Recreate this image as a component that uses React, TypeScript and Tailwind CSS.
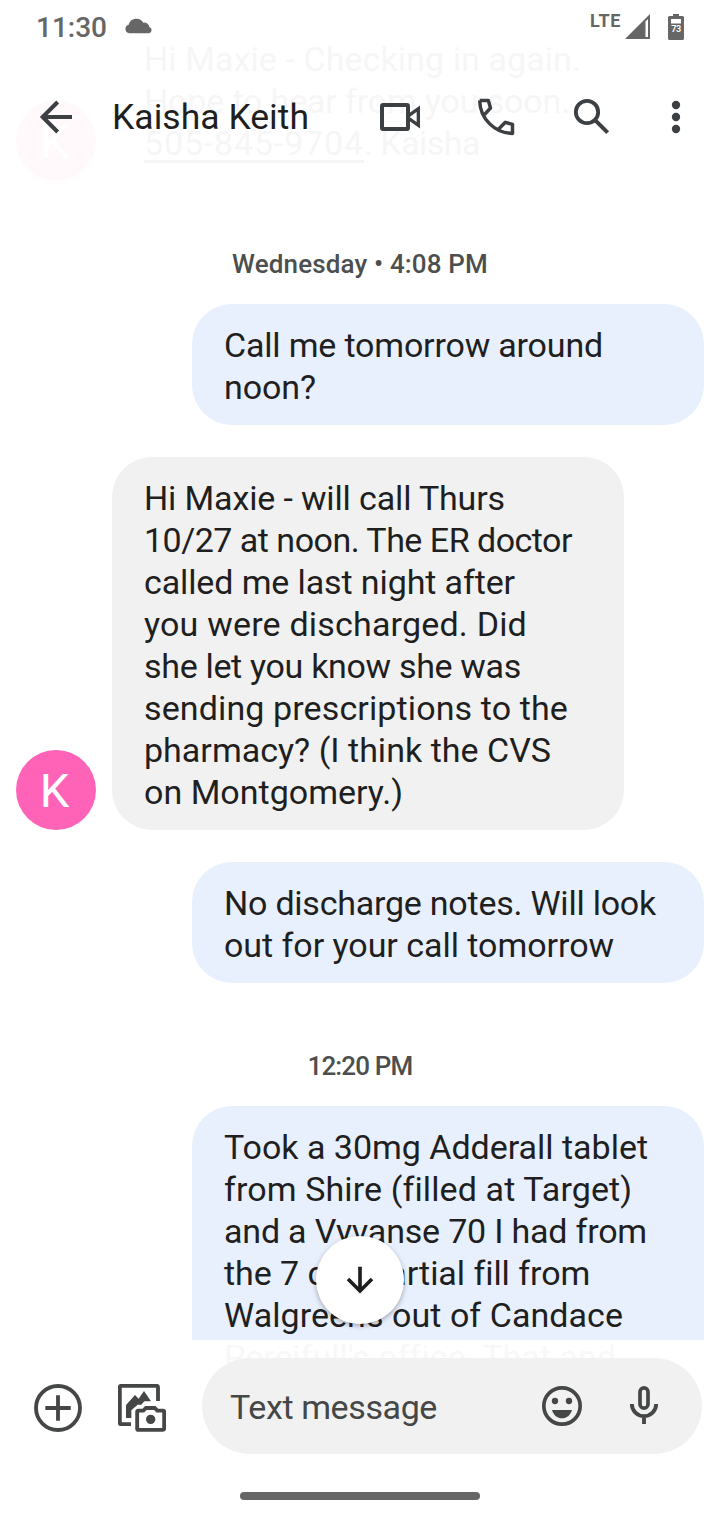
import { useLayoutEffect, useRef } from "react";
import type { ReactNode } from "react";

/** A single line of text tracked so that it fills the given width. */
function Line({ text, width, className = "" }: { text: string; width: number; className?: string }) {
  const ref = useRef<HTMLSpanElement>(null);
  useLayoutEffect(() => {
    const el = ref.current;
    if (!el) return;
    el.style.letterSpacing = "0px";
    const natural = el.getBoundingClientRect().width;
    el.style.letterSpacing = `${(width - natural) / text.length}px`;
  }, [text, width]);
  return (
    <span ref={ref} className={`inline-block whitespace-pre ${className}`}>
      {text}
    </span>
  );
}

function Icon({ box, className, children }: { box: string; className: string; children: ReactNode }) {
  return (
    <svg viewBox={box} className={`shrink-0 ${className}`} fill="none" stroke="currentColor">
      {children}
    </svg>
  );
}

type TextLine = [string, number];

function Bubble({ lines, sent }: { lines: TextLine[]; sent?: boolean }) {
  return (
    <div
      className={`flex w-[512px] shrink-0 flex-col items-start rounded-[40px] px-8 pt-5 pb-[17px] text-[34px] leading-[42px] text-[#1f1f1f] ${
        sent ? "bg-[#e8effd]" : "bg-[#f1f1f1]"
      }`}
    >
      {lines.map(([text, width]) => (
        <Line key={text} text={text} width={width} />
      ))}
    </div>
  );
}

function Avatar() {
  return (
    <div className="flex size-20 shrink-0 items-center justify-center rounded-full bg-[#ff63b8] pr-[3px] text-[47px] leading-none text-white">
      K
    </div>
  );
}

function Stamp({ text, width }: { text: string; width: number }) {
  return (
    <div className="flex justify-center text-[26px] leading-8 font-medium text-[#4c4f4e]">
      <Line text={text} width={width} />
    </div>
  );
}

function StatusBar() {
  return (
    <div className="flex h-[54px] items-center pl-9 text-[#666]">
      <Line text="11:30" width={71} className="mt-[2px] text-[28px] leading-none font-medium" />
      <Icon box="372 51 90 54" className="mb-[2px] ml-[17px] h-[18px] w-[30px]">
        <path
          d="M388 99.500a13 13 0 0 1-2-25.500a24 24 0 0 1 44-6a16 16 0 0 1 18 13a9.500 9.500 0 0 1-1 18.500z"
          fill="currentColor"
          stroke="none"
        />
      </Icon>
      <div className="ml-auto flex h-[26px] items-start">
        <Line text="LTE" width={31} className="-mt-px text-[18px] leading-[15px] font-bold" />
        <svg viewBox="0 0 26 26" className="ml-1 h-[26px] w-[26px]">
          <path d="M25 0V25H0z" fill="#666" />
          <path d="M20.500 7.500L23 5V23H20.500z" fill="#fff" />
        </svg>
        <svg viewBox="0 0 16 26" className="mr-9 ml-[17px] h-[26px] w-4">
          <path d="M5 0h6v2h3.500a1.500 1.500 0 0 1 1.500 1.500v21a1.500 1.500 0 0 1-1.500 1.500h-13a1.500 1.500 0 0 1-1.500-1.500v-21a1.500 1.500 0 0 1 1.500-1.500h3.500z" fill="#666" />
          <path d="M3 5h10v4.500h-10z" fill="#fff" />
          <text x="8" y="18" textAnchor="middle" fontSize="9" fontWeight="600" letterSpacing="-0.5" fill="#fff">
            73
          </text>
        </svg>
      </div>
    </div>
  );
}

function Header() {
  return (
    <header className="absolute inset-x-0 top-0 h-48 bg-white/96">
      <StatusBar />
      <div className="flex h-[126px] items-center pr-5 pl-8 text-[#3c4043]">
        <Icon box="96 279 144 144" className="size-12">
          <path d="M216 351H130M173 306L128 351L173 396" strokeWidth="12" />
        </Icon>
        <Line text="Kaisha Keith" width={197} className="ml-8 text-[35.500px] leading-[42px] text-[#1f1f1f]" />
        <div className="ml-auto flex items-center">
          <Icon box="48 279 144 144" className="size-12">
            <rect x="66" y="315" width="78" height="72" rx="3" strokeWidth="12" />
            <path d="M146 347L175 326V376L146 355" strokeWidth="10" />
          </Icon>
          <Icon box="336 279 144 144" className="ml-12 size-12">
            <path
              d="M359 301.500H385L391.500 324L374 343M359 301.500C360 356 404 399 457.500 400.500V373L436 367L416 387"
              strokeWidth="10.500"
              strokeLinejoin="round"
            />
          </Icon>
          <Icon box="624 279 144 144" className="ml-12 size-12">
            <circle cx="681" cy="336" r="33.500" strokeWidth="11.500" />
            <path d="M706 361L743 398" strokeWidth="12" />
          </Icon>
          <Icon box="876 279 144 144" className="ml-9 size-12">
            <g fill="currentColor" stroke="none">
              <circle cx="948" cy="315" r="12.500" />
              <circle cx="948" cy="351" r="12.500" />
              <circle cx="948" cy="387" r="12.500" />
            </g>
          </Icon>
        </div>
      </div>
    </header>
  );
}

function Composer() {
  return (
    <footer className="absolute inset-x-0 bottom-0 flex h-[180px] flex-col bg-white/97 pt-[18px] text-[#444746]">
      <div className="flex h-24 items-center pr-[18px] pl-[34px]">
        <Icon box="102 162 144 144" className="mt-1 size-12">
          <circle cx="174" cy="234" r="66" strokeWidth="11.500" />
          <path d="M136 234H212M174 196V272" strokeWidth="11.500" />
        </Icon>
        <Icon box="354 162 144 144" className="mt-1 ml-9 size-12">
          <path d="M474 213V171Q474 167.500 470 167.500H363.500Q359.500 167.500 359.500 171V279Q359.500 282.500 363.500 282.500H393" strokeWidth="11.500" />
          <path d="M378 264V225L405 195L416 206L432 183L453 214H433L424 224H413L394 241V264z" fill="currentColor" stroke="none" />
          <path d="M411.500 298V245Q411.500 242 415 242H430L438 234H464L472 242H489Q492.500 242 492.500 245V296Q492.500 299.500 489 299.500H415Q411.500 299.500 411.500 296z" strokeWidth="11.500" />
          <circle cx="452" cy="268" r="14" fill="currentColor" stroke="none" />
        </Icon>
        <div className="ml-9 flex h-24 w-[500px] items-center rounded-full bg-[#f1f1f1] pl-7">
          <Line text="Text message" width={207} className="mt-[2px] text-[34px] leading-[42px]" />
          <Icon box="534 156 144 144" className="ml-auto size-12">
            <circle cx="606" cy="228" r="54.500" strokeWidth="11" />
            <g fill="currentColor" stroke="none">
              <circle cx="585" cy="213" r="9.500" />
              <circle cx="627" cy="213" r="9.500" />
              <path d="M576 240H636C631 256 620 265 606 265S581 256 576 240z" />
            </g>
          </Icon>
          <Icon box="780 156 144 144" className="mr-[34px] ml-[34px] size-12">
            <rect x="840" y="173.500" width="24" height="61" rx="12" strokeWidth="11" />
            <path d="M815.500 222A36.500 36.500 0 0 0 888.500 222M852 260V282" strokeWidth="11.500" />
          </Icon>
        </div>
      </div>
      <div className="mx-auto mt-[38px] h-2 w-60 rounded-full bg-[#666]" />
    </footer>
  );
}

export default function App() {
  return (
    <div className="relative h-[1520px] w-[720px] overflow-hidden bg-white font-['Roboto','Liberation_Sans',sans-serif]">
      <main className="flex flex-col pt-[18px]">
        <div className="flex items-end gap-4 pl-4">
          <Avatar />
          <div className="flex w-[512px] flex-col items-start rounded-[40px] bg-[#f1f1f1] px-8 pt-5 pb-[17px] text-[34px] leading-[42px] text-[#1f1f1f]">
            <Line text="Hi Maxie - Checking in again." width={437} />
            <Line text="Hope to hear from you soon." width={426} />
            <span className="flex">
              <Line text="505-845-9704" width={220} className="h-[42px] underline decoration-[3px] underline-offset-[5px]" />
              <Line text=". Kaisha" width={116} />
            </span>
          </div>
        </div>
        <div className="mt-[67px]">
          <Stamp text="Wednesday • 4:08 PM" width={256} />
        </div>
        <div className="mt-6 flex justify-end pr-4">
          <Bubble sent lines={[["Call me tomorrow around", 379], ["noon?", 92]]} />
        </div>
        <div className="mt-8 flex items-end gap-4 pl-4">
          <Avatar />
          <Bubble
            lines={[
              ["Hi Maxie - will call Thurs", 361],
              ["10/27 at noon. The ER doctor", 428],
              ["called me last night after", 371],
              ["you were discharged. Did", 383],
              ["she let you know she was", 377],
              ["sending prescriptions to the", 424],
              ["pharmacy? (I think the CVS", 407],
              ["on Montgomery.)", 259],
            ]}
          />
        </div>
        <div className="mt-8 flex justify-end pr-4">
          <Bubble sent lines={[["No discharge notes. Will look", 432], ["out for your call tomorrow", 390]]} />
        </div>
        <div className="mt-[67px]">
          <Stamp text="12:20 PM" width={105} />
        </div>
        <div className="mt-6 flex justify-end pr-4">
          <Bubble
            sent
            lines={[
              ["Took a 30mg Adderall tablet", 424],
              ["from Shire (filled at Target)", 407],
              ["and a Vyvanse 70 I had from", 423],
              ["the 7 day partial fill from", 365],
              ["Walgreens out of Candace", 399],
              ["Percifull's office. That and", 389],
            ]}
          />
        </div>
      </main>
      <Header />
      <button
        aria-label="Scroll to latest"
        className="absolute top-[1236px] left-[316px] flex size-[88px] items-center justify-center rounded-full bg-white text-[#1f1f1f] shadow-[0_2px_5px_rgba(0,0,0,0.3)]"
      >
        <Icon box="438 168 144 144" className="size-12">
          <path d="M510 200V273M474 237L510 273L546 237" strokeWidth="11" />
        </Icon>
      </button>
      <Composer />
    </div>
  );
}
